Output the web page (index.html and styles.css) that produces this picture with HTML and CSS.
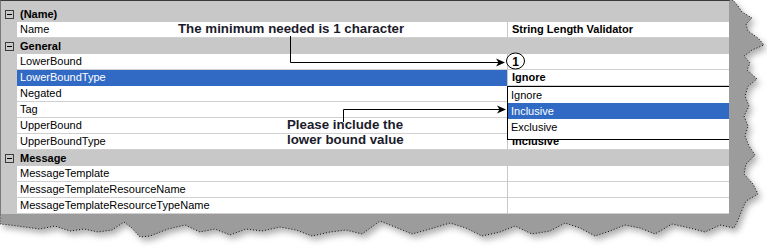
FILE: index.html
```html
<!DOCTYPE html>
<html>
<head>
<meta charset="utf-8">
<link rel="stylesheet" href="styles.css">
</head>
<body>
<div class="frame">
  <svg class="torn" width="767" height="250" viewBox="0 0 767 250">
    <defs>
      <filter id="blur" x="-10%" y="-10%" width="120%" height="120%">
        <feGaussianBlur stdDeviation="3"/>
      </filter>
    </defs>
    <polygon class="shadow" filter="url(#blur)" points="0,0 733,0 738,6 742,12 752,18 746,24 748,31 758,38 764,45 752,50 744,56 750,63 747,70 757,79 748,86 745,96 749,106 744,116 748,126 745,136 749,146 755,155 746,164 744,174 753,184 758,194 746,201 742,210 738,220 734,228 720,225 705,232 690,228 672,224 655,234 640,228 625,225 610,231 595,236 580,228 565,223 550,231 532,234 515,226 500,232 482,236 466,228 450,223 430,229 412,234 395,227 380,221 362,234 346,230 330,232 312,236 296,230 280,227 262,231 246,229 230,235 215,229 200,232 185,225 168,229 150,236 140,237 132,228 124,222 112,230 98,232 84,229 70,231 55,226 40,229 25,227 10,225 0,224" transform="translate(3,4)"/>
    <polygon class="paper" points="0,0 733,0 738,6 742,12 752,18 746,24 748,31 758,38 764,45 752,50 744,56 750,63 747,70 757,79 748,86 745,96 749,106 744,116 748,126 745,136 749,146 755,155 746,164 744,174 753,184 758,194 746,201 742,210 738,220 734,228 720,225 705,232 690,228 672,224 655,234 640,228 625,225 610,231 595,236 580,228 565,223 550,231 532,234 515,226 500,232 482,236 466,228 450,223 430,229 412,234 395,227 380,221 362,234 346,230 330,232 312,236 296,230 280,227 262,231 246,229 230,235 215,229 200,232 185,225 168,229 150,236 140,237 132,228 124,222 112,230 98,232 84,229 70,231 55,226 40,229 25,227 10,225 0,224"/>
  </svg>

  <div class="grid">
    <div class="cat"><span class="tog"></span><span class="clabel">(Name)</span></div>
    <div class="row"><span class="gut"></span><span class="name">Name</span><span class="val b">String Length Validator</span></div>
    <div class="cat"><span class="tog"></span><span class="clabel">General</span></div>
    <div class="row"><span class="gut"></span><span class="name">LowerBound</span><span class="val"></span></div>
    <div class="row"><span class="gut"></span><span class="name sel">LowerBoundType</span><span class="val b">Ignore</span></div>
    <div class="row"><span class="gut"></span><span class="name">Negated</span><span class="val"></span></div>
    <div class="row"><span class="gut"></span><span class="name">Tag</span><span class="val"></span></div>
    <div class="row"><span class="gut"></span><span class="name">UpperBound</span><span class="val"></span></div>
    <div class="row"><span class="gut"></span><span class="name">UpperBoundType</span><span class="val b">Inclusive</span></div>
    <div class="cat"><span class="tog"></span><span class="clabel">Message</span></div>
    <div class="row"><span class="gut"></span><span class="name">MessageTemplate</span><span class="val"></span></div>
    <div class="row"><span class="gut"></span><span class="name">MessageTemplateResourceName</span><span class="val"></span></div>
    <div class="row"><span class="gut"></span><span class="name">MessageTemplateResourceTypeName</span><span class="val"></span></div>
  </div>

  <div class="dropdown">
    <div class="item">Ignore</div>
    <div class="item sel">Inclusive</div>
    <div class="item">Exclusive</div>
  </div>

  <div class="note n1">The minimum needed is 1 character</div>
  <div class="note n2">Please include the<br>lower bound value</div>

  <svg class="arrows" width="767" height="250" viewBox="0 0 767 250">
    <polyline points="290.5,36 290.5,62.5 499,62.5" fill="none" stroke="#000" stroke-width="1"/>
    <path d="M505,62.5 L496,58.5 L498.5,62.5 L496,66.5 Z" fill="#000"/>
    <ellipse cx="515.5" cy="61" rx="9" ry="8" fill="#fff" stroke="#000" stroke-width="1"/>
    <text x="515.5" y="65.5" text-anchor="middle" class="num">1</text>
    <polyline points="343.5,122 343.5,109.5 500,109.5" fill="none" stroke="#000" stroke-width="1"/>
    <path d="M506,109.5 L497,105.5 L499.5,109.5 L497,113.5 Z" fill="#000"/>
  </svg>
</div>
</body>
</html>
```

FILE: styles.css
```css
html, body {
  margin: 0;
  padding: 0;
  background: #fff;
}

body {
  font-family: "Liberation Sans", Arial, sans-serif;
}

.frame {
  position: relative;
  z-index: 0;
  width: 767px;
  height: 250px;
  overflow: hidden;
}

.torn {
  position: absolute;
  left: 0;
  top: 0;
  z-index: -1;
}

.torn .shadow {
  fill: #9a9a9a;
  opacity: 0.8;
}

.torn .paper {
  fill: #9c9c9c;
  stroke: #111;
  stroke-width: 1;
  stroke-dasharray: 1 2;
}

.grid {
  width: 728px;
  border-top: 1px solid #3a3a3a;
  border-left: 1px solid #7a7a7a;
  padding-top: 5px;
  background: #c8c8c8;
  font-size: 11px;
  color: #000;
}

.row {
  display: flex;
  height: 16px;
}

.gut {
  width: 16px;
  flex: none;
}

.name {
  width: 490px;
  flex: none;
  box-sizing: border-box;
  background: #fff;
  border-bottom: 1px solid #d0d0d0;
  padding-left: 3px;
  line-height: 15px;
  white-space: nowrap;
}

.name.sel {
  background: #316ac5;
  color: #fff;
  border-bottom-color: #316ac5;
}

.val {
  flex: 1;
  box-sizing: border-box;
  background: #fff;
  border-left: 1px solid #c8c8c8;
  border-bottom: 1px solid #d0d0d0;
  padding-left: 4px;
  line-height: 15px;
  white-space: nowrap;
}

.b {
  font-weight: bold;
}

.cat {
  display: flex;
  align-items: center;
  height: 16px;
  font-weight: bold;
}

.tog {
  position: relative;
  width: 9px;
  height: 9px;
  box-sizing: border-box;
  margin-left: 4px;
  border: 1px solid #3c3c3c;
  flex: none;
}

.tog::after {
  content: "";
  position: absolute;
  left: 1px;
  top: 3px;
  width: 5px;
  height: 1px;
  background: #000;
}

.clabel {
  margin-left: 6px;
  line-height: 16px;
}

.dropdown {
  position: absolute;
  left: 507px;
  top: 86px;
  width: 222px;
  height: 54px;
  box-sizing: border-box;
  border: 1px solid #000;
  border-right: none;
  background: #fff;
  font-size: 11px;
}

.item {
  height: 16px;
  line-height: 16px;
  padding-left: 3px;
}

.item.sel {
  background: #316ac5;
  color: #fff;
}

.note {
  position: absolute;
  font-weight: bold;
  font-size: 13.3px;
  color: #1b1b2b;
  white-space: nowrap;
}

.n1 {
  left: 178px;
  top: 21px;
  line-height: 16px;
}

.n2 {
  left: 287px;
  top: 117px;
  line-height: 15px;
}

.arrows {
  position: absolute;
  left: 0;
  top: 0;
  pointer-events: none;
}

.num {
  font-family: "Liberation Sans", Arial, sans-serif;
  font-weight: bold;
  font-size: 12px;
  fill: #000;
}
```
